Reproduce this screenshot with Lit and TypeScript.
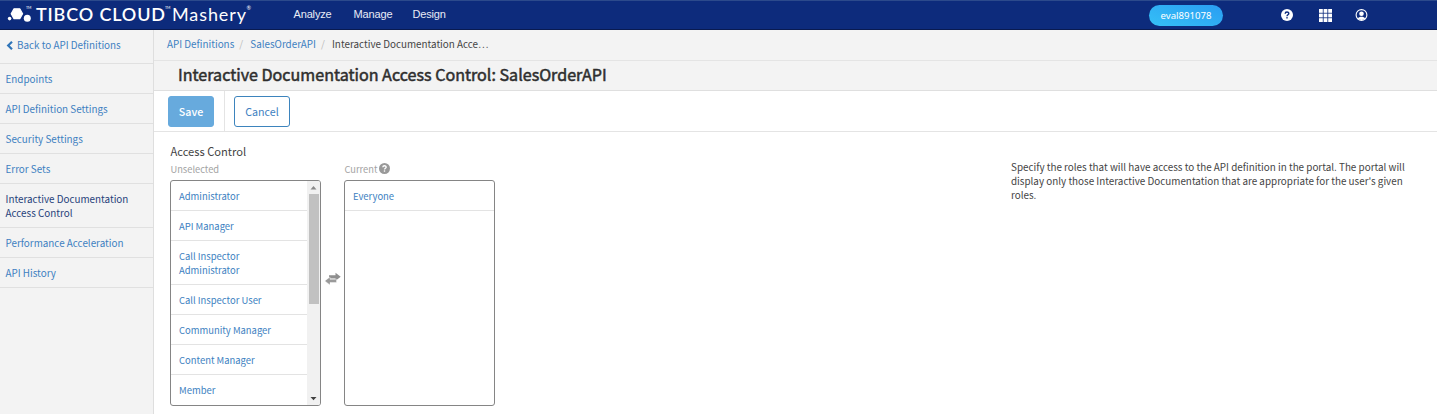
import { LitElement, html, svg, css } from "lit";
import { customElement, property } from "lit/decorators.js";
import { classMap } from "lit/directives/class-map.js";

const NAV = ["Analyze", "Manage", "Design"];
const SIDE = [
  "Endpoints",
  "API Definition Settings",
  "Security Settings",
  "Error Sets",
  "Interactive Documentation Access Control",
  "Performance Acceleration",
  "API History",
];
const UNSELECTED = [
  "Administrator",
  "API Manager",
  "Call Inspector Administrator",
  "Call Inspector User",
  "Community Manager",
  "Content Manager",
  "Member",
];

function gridCell(x: number, y: number) {
  return svg`<rect x=${x} y=${y} width="3.8" height="3.8" />`;
}

@customElement("top-bar")
export class TopBar extends LitElement {
  static styles = css`
    :host {
      display: flex;
      box-sizing: border-box;
      height: 30px;
      background: #0d2b7c;
      border-top: 1px solid #2c4a8c;
      border-bottom: 1px solid #091a50;
      color: #fff;
      letter-spacing: 0;
    }
    .logo { display: block; width: 260px; height: 28px; flex: none; }
    .brand { font-family: Lato, sans-serif; fill: #fff; }
    .nav {
      display: flex;
      gap: 22px;
      padding-left: 33.5px;
      font: 11px/27px "Liberation Sans", Arial, sans-serif;
      letter-spacing: -0.15px;
      color: #e8ecf6;
    }
    .nav span:last-child { margin-left: -2px; }
    .right { display: flex; align-items: center; margin-left: auto; padding-right: 69px; }
    .pill {
      width: 74px;
      height: 21px;
      border-radius: 11px;
      background: linear-gradient(20deg, #35c0f6, #2a9df2);
      font: 9.6px/21px "Noto Sans", sans-serif;
      text-align: center;
      margin-right: 58px;
    }
    .right svg { display: block; }
    .help { margin-right: 26px; }
    .grid { margin-right: 23px; }
  `;
  render() {
    return html`
      <svg class="logo" viewBox="0 0 260 28">
        <g fill="#fff">
          <path d="M14 7.800h5.800l2.800 4.900-2.800 4.900H14l-2.800-4.900z" stroke="#fff" stroke-width="1.200" stroke-linejoin="round" />
          <circle cx="27.3" cy="17.2" r="3.5" />
          <circle cx="9.6" cy="17.6" r="1.8" />
        </g>
        <text class="brand" x="26" y="7.5" font-size="3.6">TM</text>
        <text class="brand" x="36" y="20.300" font-size="18" font-weight="600" textLength="129">TIBCO CLOUD</text>
        <text class="brand" x="165" y="7.5" font-size="3.6">TM</text>
        <text class="brand" x="172" y="20.300" font-size="18" textLength="74">Mashery</text>
        <text class="brand" x="246.5" y="9" font-size="5.5">®</text>
      </svg>
      <nav class="nav">${NAV.map((n) => html`<span>${n}</span>`)}</nav>
      <div class="right">
        <div class="pill">eval891078</div>
        <svg class="help" width="12" height="12" viewBox="0 0 12 12">
          <circle cx="6" cy="6" r="6" fill="#fff" />
          <path d="M4.2 4.7c0-2.2 3.6-2.2 3.6-.1C7.8 5.800 6 5.800 6 7.200" fill="none" stroke="#0d2b7c" stroke-width="1.4" />
          <rect x="5.300" y="8.100" width="1.400" height="1.400" fill="#0d2b7c" />
        </svg>
        <svg class="grid" width="13" height="13" viewBox="0 0 13 13" fill="#fff">
          ${[0, 4.6, 9.2].map((y) => [0, 4.6, 9.2].map((x) => gridCell(x, y)))}
        </svg>
        <svg width="13" height="12" viewBox="0 0 13 12">
          <circle cx="6.500" cy="6" r="5.400" fill="none" stroke="#fff" stroke-width="1.100" />
          <circle cx="6.500" cy="4.700" r="2.300" fill="#fff" />
          <path d="M2.800 9.500C4 7.300 9 7.300 10.200 9.500 8.500 11.400 4.500 11.400 2.800 9.500z" fill="#fff" />
        </svg>
      </div>
    `;
  }
}

@customElement("role-list")
export class RoleList extends LitElement {
  @property({ type: Array }) items: string[] = [];
  @property({ type: Boolean }) scroll = false;
  static styles = css`
    :host {
      display: flex;
      box-sizing: border-box;
      width: 151px;
      height: 226px;
      border: 1px solid #858585;
      border-radius: 3px;
      overflow: hidden;
      background: #fff;
      font-size: 9.45px;
    }
    .items { flex: 1; overflow: hidden; }
    .item {
      padding: 8px 24px 7px 8px;
      border-bottom: 1px solid #e3e3e3;
      line-height: 14px;
      color: #3d7fc1;
    }
    .item:last-child:not(:first-child) { border-bottom: 0; }
    .bar {
      display: flex;
      flex-direction: column;
      align-items: center;
      width: 13px;
      background: #f1f1f1;
    }
    .bar svg { display: block; flex: none; }
    .thumb { width: 10px; height: 110px; background: #c1c1c1; }
    .gap { flex: 1; }
  `;
  render() {
    return html`
      <div class="items">${this.items.map((i) => html`<div class="item">${i}</div>`)}</div>
      ${this.scroll
        ? html`<div class="bar">
            <svg width="13" height="13"><path d="M3.500 8.500h6l-3-3.500z" fill="#8a8a8a" /></svg>
            <div class="thumb"></div>
            <div class="gap"></div>
            <svg width="13" height="13"><path d="M3.500 5h6l-3 3.300z" fill="#404040" /></svg>
          </div>`
        : null}
    `;
  }
}

@customElement("app-root")
export class AppRoot extends LitElement {
  static styles = css`
    :host {
      display: block;
      height: 414px;
      overflow: hidden;
      background: #fff;
      color: #444;
      font: 9.87px/14px "Noto Sans CJK SC", sans-serif;
    }
    .body { display: flex; height: 384px; }
    .side {
      box-sizing: border-box;
      width: 154px;
      flex: none;
      background: #f3f3f3;
      border-right: 1px solid #dedede;
      color: #3d7fc1;
    }
    .back { display: flex; align-items: center; gap: 4px; padding: 8px 6px 11px; border-bottom: 1px solid #e0e0e0; }
    .link { padding: 8px 18px 7px 5.500px; border-bottom: 1px solid #e0e0e0; }
    .active { color: #26417a; }
    .main { flex: 1; min-width: 0; }
    .crumbs {
      display: flex;
      box-sizing: border-box;
      height: 31px;
      padding: 7px 13px;
      background: #f3f3f3;
      border-bottom: 1px solid #e4e4e4;
      color: #3d7fc1;
      white-space: pre;
    }
    .sep { color: #bbb; width: 16px; padding-left: 5px; box-sizing: border-box; }
    .here { color: #444; }
    .title {
      box-sizing: border-box;
      height: 30px;
      margin: 0;
      padding-left: 24px;
      background: #f3f3f3;
      border-bottom: 1px solid #dfdfdf;
      font-size: 16.1px;
      line-height: 26px;
      font-weight: 400;
      -webkit-text-stroke: 0.5px #2e2e2e;
      color: #2e2e2e;
    }
    .tools { display: flex; box-sizing: border-box; height: 41px; padding-left: 14px; border-bottom: 1px solid #e4e4e4; }
    .btn {
      box-sizing: border-box;
      height: 31px;
      margin-top: 5px;
      border: 1px solid #3d84bd;
      border-radius: 3px;
      font-size: 10.7px;
      line-height: 29px;
      text-align: center;
      color: #3d7fc1;
    }
    .save { width: 46px; background: #67aadd; border-color: #67aadd; color: #fff; font-weight: 500; }
    .cancel { width: 56px; margin-left: 9px; }
    .rule { width: 1px; margin-left: 10px; background: #e4e4e4; }
    .content { display: flex; justify-content: space-between; padding: 11px 28px 0 16px; }
    .heading { font-size: 11.15px; line-height: 16px; padding: 0 0 1px 0.500px; }
    .lists { display: flex; }
    .label { display: flex; gap: 2px; height: 20px; line-height: 19px; font-size: 9.3px; color: #a3a3a3; padding-left: 0.500px; }
    .label svg { margin-top: 3px; }
    .swap { width: 23px; padding: 112px 0 0 3px; box-sizing: border-box; }
    .swap svg { display: block; }
    .desc { width: 398px; padding-top: 17px; }
  `;
  render() {
    return html`
      <top-bar></top-bar>
      <div class="body">
        <aside class="side">
          <div class="back">
            <svg width="7" height="9" viewBox="0 0 7 9"><path d="M6 .8L2.200 4.500 6 8.200" fill="none" stroke="#2f74b8" stroke-width="2.200" /></svg>
            <span>Back to API Definitions</span>
          </div>
          ${SIDE.map((s, i) => html`<div class=${classMap({ link: true, active: i === 4 })}>${s}</div>`)}
        </aside>
        <main class="main">
          <div class="crumbs"><span>API Definitions</span><span class="sep">/</span><span>SalesOrderAPI</span><span class="sep">/</span><span class="here">Interactive Documentation Acce…</span></div>
          <h1 class="title">Interactive Documentation Access Control: SalesOrderAPI</h1>
          <div class="tools">
            <div class="btn save">Save</div>
            <div class="rule"></div>
            <div class="btn cancel">Cancel</div>
          </div>
          <div class="content">
            <section>
              <div class="heading">Access Control</div>
              <div class="lists">
                <div>
                  <div class="label">Unselected</div>
                  <role-list .items=${UNSELECTED} scroll></role-list>
                </div>
                <div class="swap">
                  <svg width="17" height="14" viewBox="0 0 17 14" fill="#8f8f8f">
                    <path d="M5 3.200h6.500V.8l5.200 4-5.200 4V6.400H5z" />
                    <path d="M12.500 7.200H6V4.900L.8 8.900 6 12.900V10.500h6.500z" fill="#9a9a9a" stroke="#fff" stroke-width=".4" />
                  </svg>
                </div>
                <div>
                  <div class="label">
                    <span>Current</span>
                    <svg width="11" height="11" viewBox="0 0 12 12">
                      <circle cx="6" cy="6" r="6" fill="#999" />
                      <path d="M4.200 4.700c0-2.200 3.600-2.200 3.600-.1C7.800 5.800 6 5.800 6 7.200" fill="none" stroke="#fff" stroke-width="1.500" />
                      <rect x="5.250" y="8" width="1.500" height="1.500" fill="#fff" />
                    </svg>
                  </div>
                  <role-list .items=${["Everyone"]}></role-list>
                </div>
              </div>
            </section>
            <div class="desc">
              Specify the roles that will have access to the API definition in the portal. The portal will
              display only those Interactive Documentation that are appropriate for the user's given roles.
            </div>
          </div>
        </main>
      </div>
    `;
  }
}
